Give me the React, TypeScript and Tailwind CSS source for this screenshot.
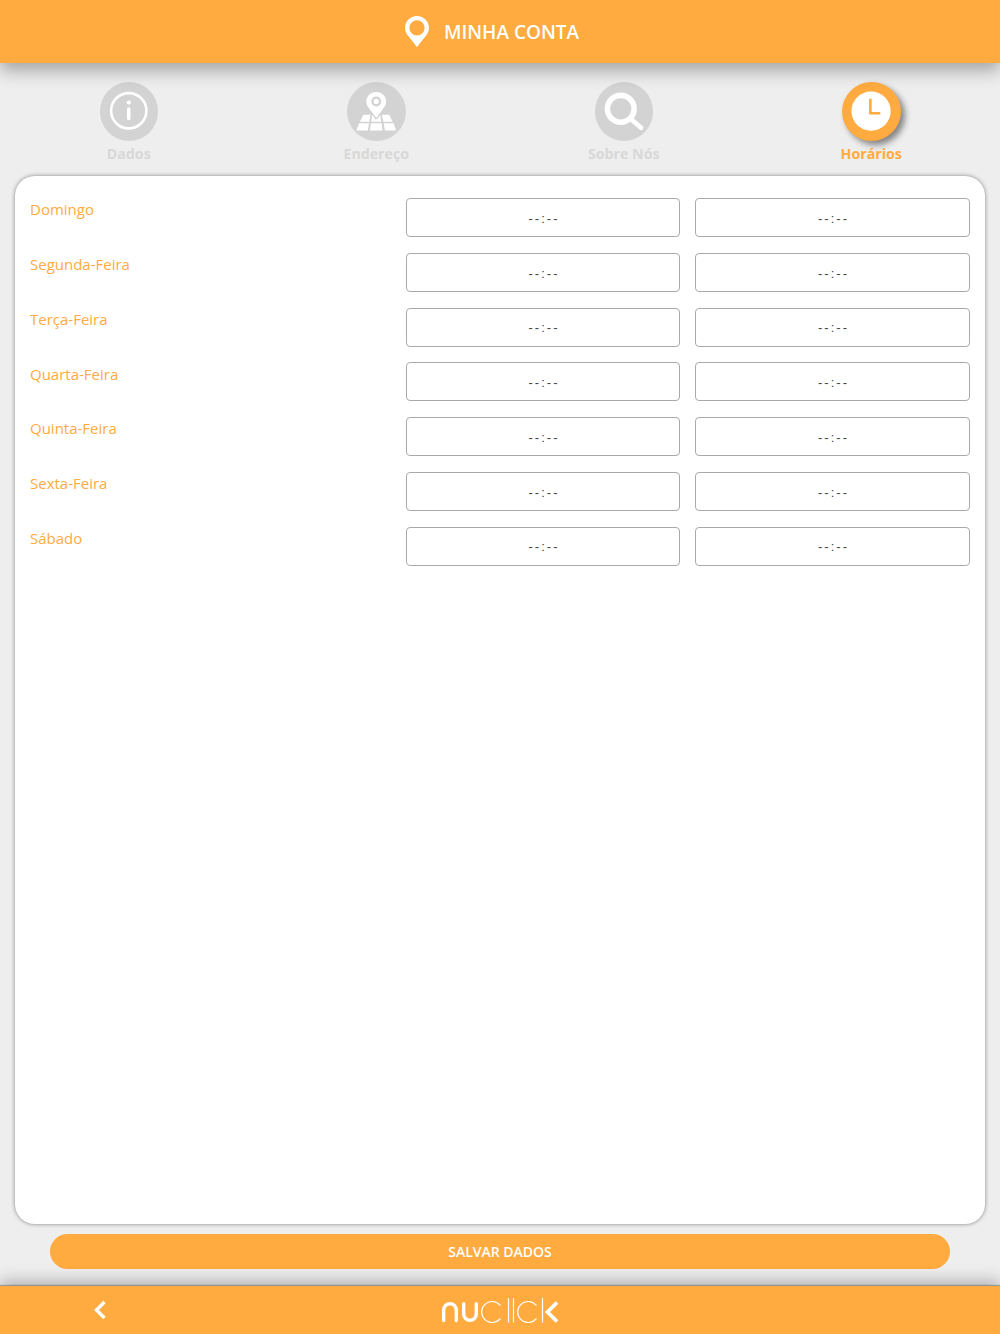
const orange = "#ffab40";

function InfoIcon() {
  return (
    <svg viewBox="0 0 59 59" className="w-full h-full">
      <circle cx="29" cy="29" r="17.8" fill="none" stroke="#fff" strokeWidth="2.6" />
      <circle cx="29" cy="20.8" r="2.1" fill="#fff" />
      <rect x="27.2" y="25.5" width="3.6" height="13" rx="1.8" fill="#fff" />
    </svg>
  );
}

function MapIcon() {
  return (
    <svg viewBox="0 0 59 59" className="w-full h-full">
      <path fillRule="evenodd" fill="#fff" d="M29.5 10c-5.6 0-10 4.2-10 9.6 0 2.1.7 3.9 1.8 5.6l8.2 11.2 8.2-11.2c1.1-1.7 1.8-3.5 1.8-5.6 0-5.4-4.4-9.6-10-9.6zm0 4.6a5 5 0 1 1 0 10 5 5 0 0 1 0-10z" />
      <circle cx="29.5" cy="19.6" r="2.6" fill="#fff" />
      <path fill="#fff" d="M16.5 33h7.3l-1.4 7h-9.4zM35.2 33h7.3l3.6 7h-9.4zM12.2 41.5h10l-1.2 7.5H9.5zM24 41.5h11l.8 7.5H23.2zM37 41.5h10l2.5 7.5H38.3zM25.4 33l3.2 4.6h1.8l3.2-4.6.8 7H24.4z" />
    </svg>
  );
}

function SearchIcon() {
  return (
    <svg viewBox="0 0 59 59" className="w-full h-full">
      <circle cx="26" cy="27" r="13.5" fill="none" stroke="#fff" strokeWidth="5.6" />
      <path d="M37 38l9.5 8.2" stroke="#fff" strokeWidth="4.6" strokeLinecap="round" />
    </svg>
  );
}

function ClockIcon() {
  return (
    <svg viewBox="0 0 59 59" className="w-full h-full">
      <circle cx="29.3" cy="29.3" r="19.8" fill="#fff" />
      <path d="M28.6 17v14.5h10" fill="none" stroke={orange} strokeWidth="2.6" />
    </svg>
  );
}

function Tab({ label, active, children }: { label: string; active?: boolean; children: React.ReactNode }) {
  return (
    <div className="flex flex-col items-center">
      <div
        className={
          active
            ? "w-[58.5px] h-[58.5px] rounded-full bg-[#ffab40] shadow-[4px_4px_6px_rgba(0,0,0,0.45)]"
            : "w-[58.5px] h-[58.5px] rounded-full bg-[#d3d3d3]"
        }
      >
        {children}
      </div>
      <span
        className={
          active
            ? "mt-[3.5px] text-[14.2px] leading-[20px] font-bold text-[#ffab40]"
            : "mt-[3.5px] text-[14.2px] leading-[20px] font-bold text-[#d8d8d8]"
        }
      >
        {label}
      </span>
    </div>
  );
}

function TimeBox() {
  return (
    <div className="h-[39px] rounded-[4px] border border-[#aaaaaa] bg-white flex items-center justify-center pt-[2px] pl-[2px] text-[13px] tracking-[2px] text-[#444] font-['Liberation_Sans',sans-serif]">
      --:--
    </div>
  );
}

const days = ["Domingo", "Segunda-Feira", "Terça-Feira", "Quarta-Feira", "Quinta-Feira", "Sexta-Feira", "Sábado"];

function Logo() {
  return (
    <svg viewBox="0 0 118 26" className="w-[118px] h-[26px]" fill="none" stroke="#fff" strokeLinecap="round">
      <path d="M2.7 23.6V13a6.3 6.3 0 0 1 12.6 0v10.6" strokeWidth="3.4" />
      <path d="M22.7 6.7V17a6.3 6.3 0 0 0 12.6 0V6.7" strokeWidth="3.4" />
      <path d="M59 8A10.5 10.5 0 1 0 59 22" strokeWidth="1.2" />
      <path d="M67.5 1.5v23.5M72.5 1.5v23.5" strokeWidth="1.2" />
      <path d="M95 8A10.5 10.5 0 1 0 95 22" strokeWidth="1.2" />
      <path d="M101.5 1.5v23.5" strokeWidth="1.2" />
      <path d="M116 5.5l-9.5 9.5 9.5 9.5" strokeWidth="3.8" strokeLinecap="butt" />
    </svg>
  );
}

export default function App() {
  return (
    <div className="h-[1334px] flex flex-col bg-[#eeeeee] font-['Open_Sans',sans-serif] overflow-hidden">
      <header className="relative z-10 h-[63px] shrink-0 bg-[#ffab40] shadow-[0_8px_16px_rgba(0,0,0,0.3)] flex items-center justify-center gap-[15px] pr-[16px]">
        <svg viewBox="0 0 24 32" className="w-[24px] h-[32px]">
          <path fillRule="evenodd" fill="#fff" d="M12 0C5.4 0 0 5.2 0 11.7c0 3 1.1 5.2 2.5 7.3L12 31l9.5-12c1.4-2.1 2.5-4.3 2.5-7.3C24 5.2 18.6 0 12 0zm0 4.2a7.6 7.6 0 1 1 0 15.2 7.6 7.6 0 0 1 0-15.2z" />
        </svg>
        <span className="pt-[2px] text-[19px] font-semibold text-white leading-none">MINHA CONTA</span>
      </header>

      <nav className="grid grid-cols-4 px-[5px] pt-[19px] h-[113px] shrink-0">
        <Tab label="Dados"><InfoIcon /></Tab>
        <Tab label="Endereço"><MapIcon /></Tab>
        <Tab label="Sobre Nós"><SearchIcon /></Tab>
        <Tab label="Horários" active><ClockIcon /></Tab>
      </nav>

      <main className="mx-[15px] h-[1048px] shrink-0 rounded-[20px] bg-white shadow-[0_0_4px_rgba(0,0,0,0.45)] px-[15px] pt-[22px]">
        <div className="flex flex-col gap-[15.75px]">
          {days.map((d) => (
            <div key={d} className="grid grid-cols-[361px_274px_275px] gap-x-[15px]">
              <span className="-mt-[0.6px] text-[15px] leading-[24px] text-[#ffab40]">{d}</span>
              <TimeBox />
              <TimeBox />
            </div>
          ))}
        </div>
      </main>

      <div className="px-[50px] mt-[10px] shrink-0">
        <button className="w-full h-[35px] rounded-full bg-[#ffab40] text-white text-[14px] font-semibold">
          SALVAR DADOS
        </button>
      </div>

      <footer className="relative mt-[17px] h-[48px] shrink-0 bg-[#ffab40] shadow-[0_-6px_14px_rgba(0,0,0,0.24),0_-1px_1px_rgba(0,0,0,0.25)] flex items-center justify-center">
        <svg viewBox="0 0 14 20" className="absolute left-[93px] top-[14px] w-[14px] h-[20px]" fill="none" stroke="#fff" strokeWidth="3.4">
          <path d="M11.5 2L3.5 10l8 8" />
        </svg>
        <Logo />
      </footer>
    </div>
  );
}
